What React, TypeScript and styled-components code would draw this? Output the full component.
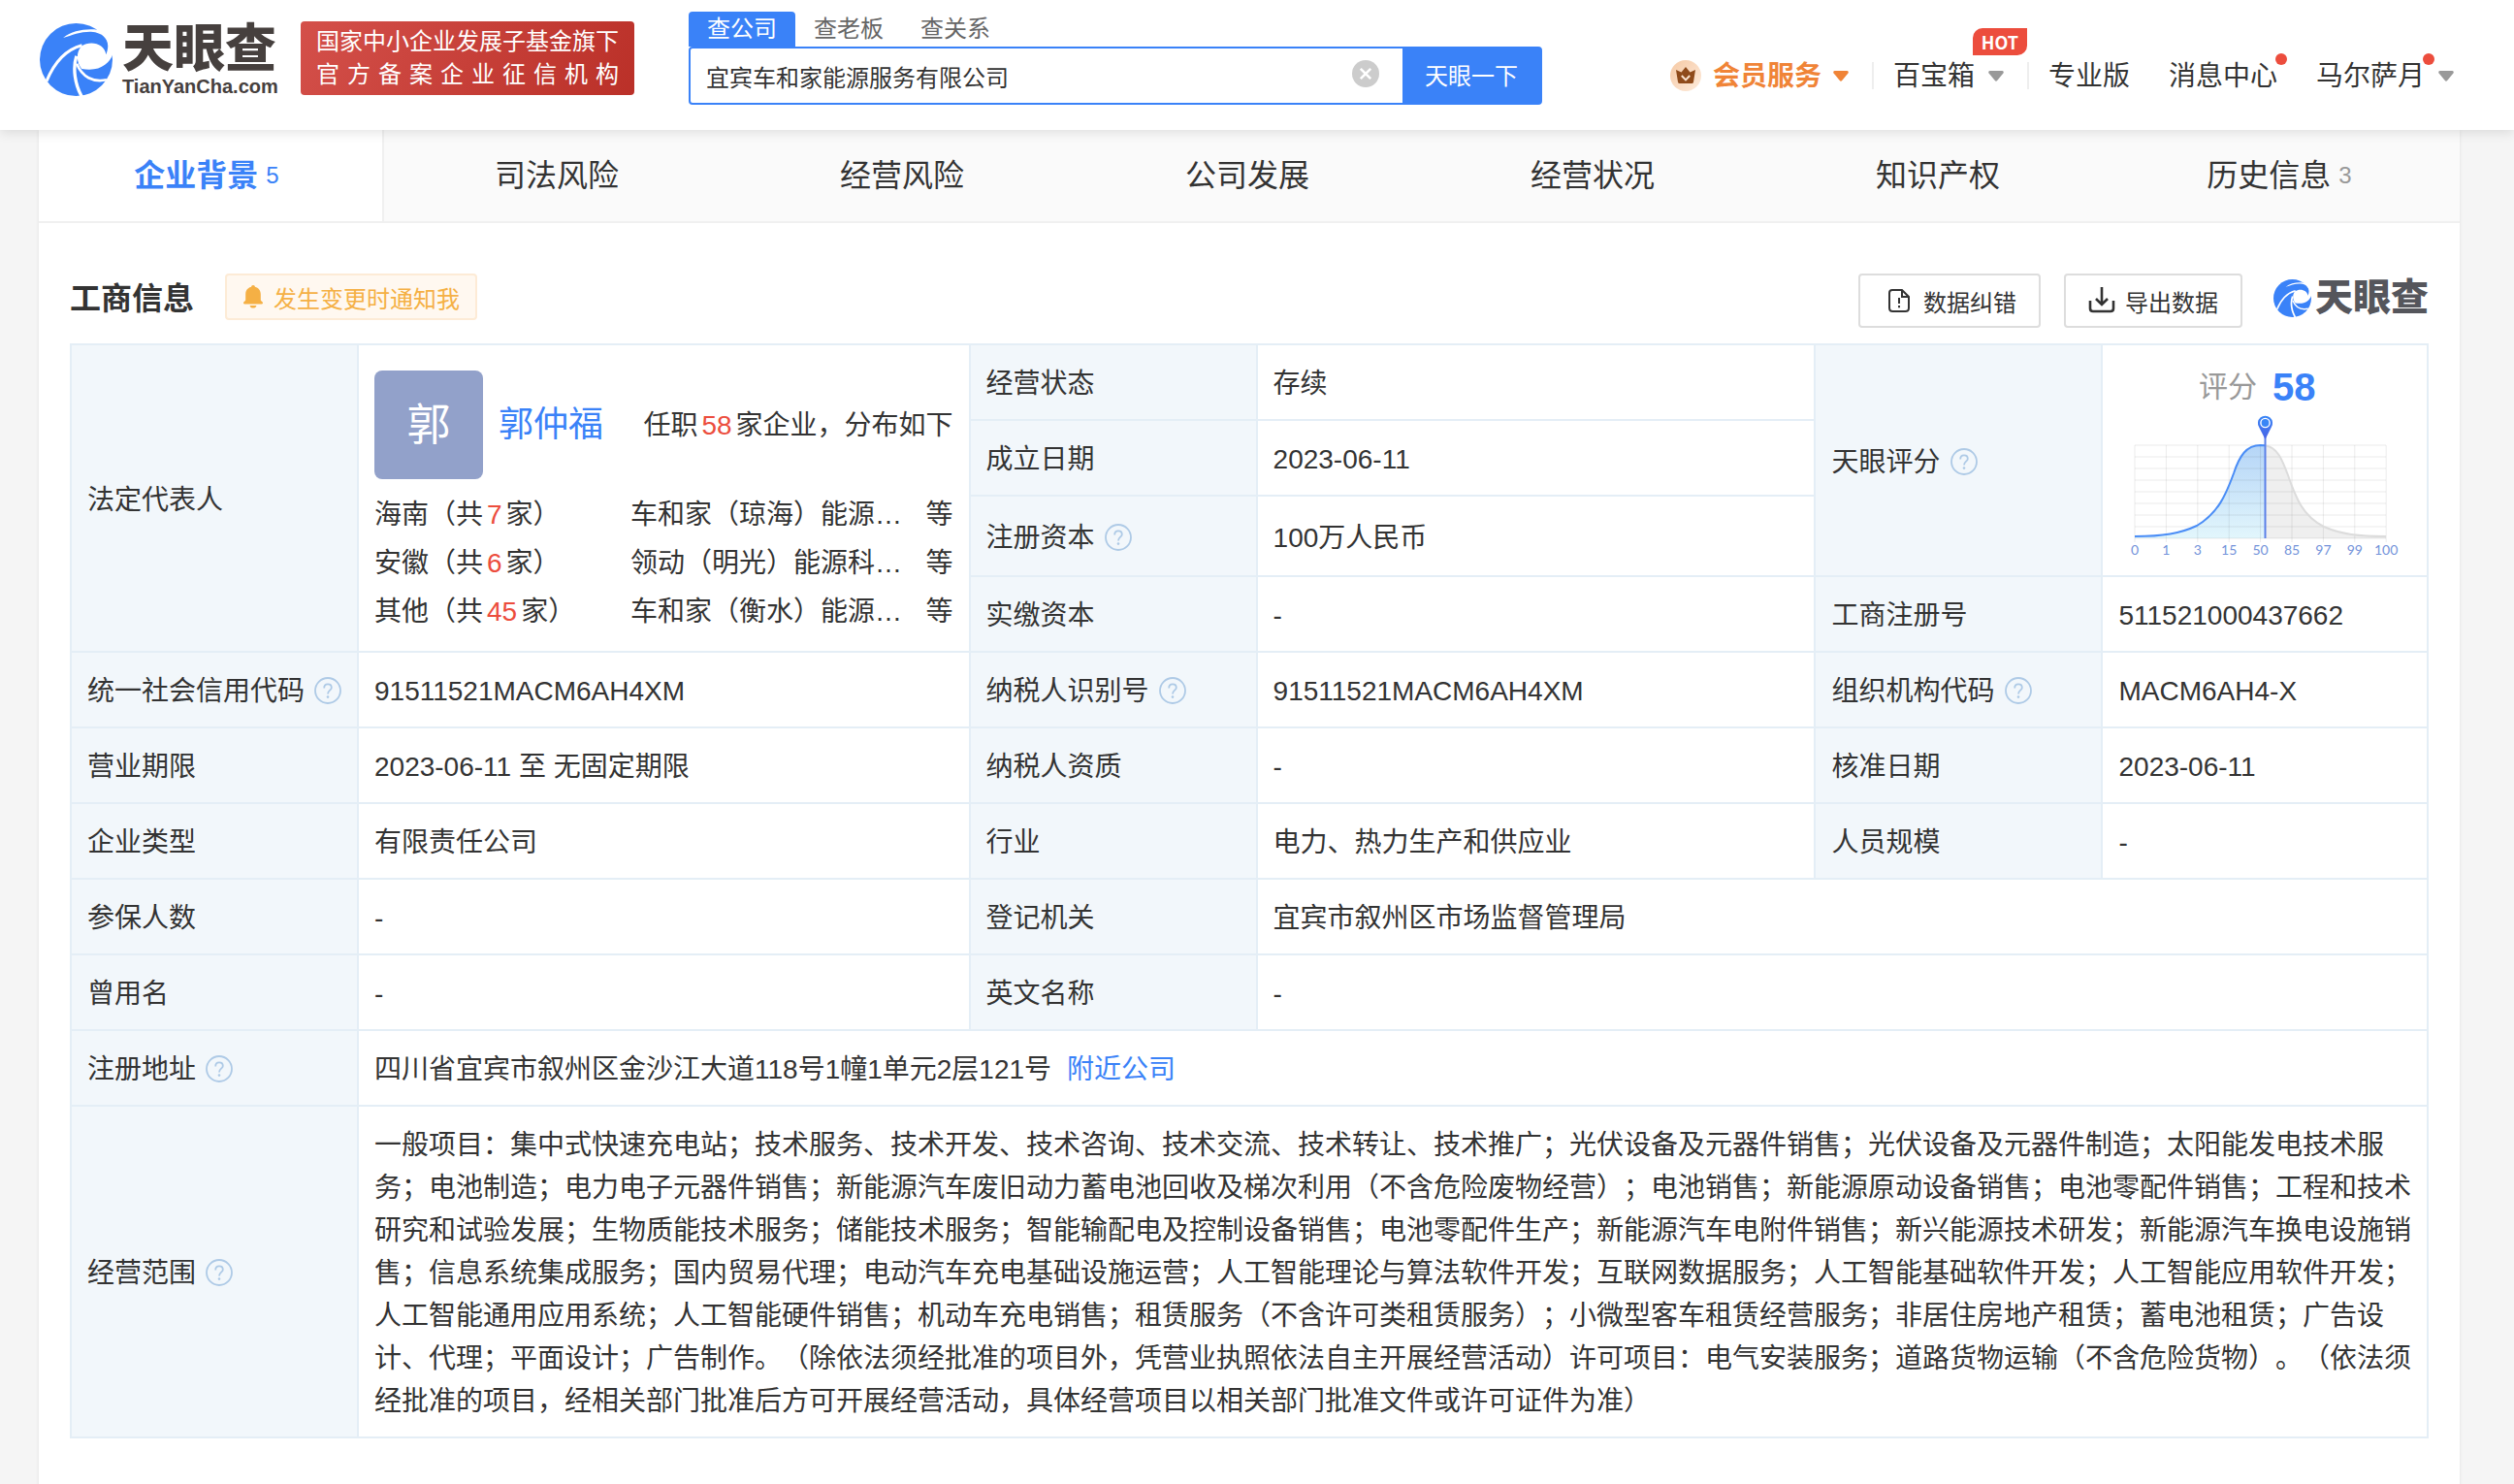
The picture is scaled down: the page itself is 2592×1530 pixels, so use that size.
import React from 'react';
import styled, { createGlobalStyle } from 'styled-components';

const BLUE = '#3a82f8';
const RED = '#ec4d3d';
const LINE = '#e4eef6';

const GlobalStyle = createGlobalStyle`
  *, *::before, *::after { box-sizing: border-box; }
  body {
    margin: 0;
    background: #f5f5f5;
    color: #333;
    font-family: "Liberation Sans", "Noto Sans CJK SC", sans-serif;
    font-size: 28px;
    line-height: 44px;
    text-spacing-trim: space-all;
  }
  a { color: inherit; text-decoration: none; }
  button, input { font-family: inherit; color: inherit; margin: 0; }
  svg { display: block; flex: none; }
`;

/* ---------- header ---------- */

const Header = styled.header`
  position: relative;
  z-index: 1;
  display: flex;
  align-items: flex-start;
  height: 134px;
  padding: 0 62px 0 41px;
  background: #fff;
  box-shadow: 0 2px 12px rgba(0, 0, 0, 0.12);
`;

const Brand = styled.a`
  display: flex;
  align-items: center;
  gap: 10px;
  margin-top: 23px;
  white-space: nowrap;
`;

const BrandText = styled.span`
  display: flex;
  flex-direction: column;
  width: 160px;
  color: #46403e;
`;

const BrandName = styled.span`
  font-size: 53px;
  line-height: 56px;
  font-weight: 900;
`;

const BrandDomain = styled.span`
  font-size: 20px;
  line-height: 20px;
  font-weight: 700;
`;

const Slogan = styled.p`
  width: 344px;
  margin: 22px 0 0 24px;
  padding: 4px 16px;
  border-radius: 4px;
  background: linear-gradient(120deg, #d4504a, #ba3028);
  color: #fff;
  font-size: 24px;
  line-height: 34px;
`;

const SloganLine = styled.span`
  display: block;
  white-space: nowrap;
  text-align: justify;
  text-align-last: justify;
`;

const Search = styled.form`
  flex: 0 1 880px;
  margin: 12px 0 0 56px;
`;

const SearchTabs = styled.div`
  display: flex;
`;

const SearchTab = styled.button<{ $active?: boolean }>`
  height: 36px;
  padding: 0 19px;
  border: 0;
  border-radius: 4px 4px 0 0;
  background: ${p => (p.$active ? BLUE : 'transparent')};
  color: ${p => (p.$active ? '#fff' : '#666')};
  font-size: 24px;
  line-height: 36px;
  white-space: nowrap;
`;

const SearchBox = styled.div`
  display: flex;
  height: 60px;
  border: 2px solid ${BLUE};
  border-radius: 4px;
  background: ${BLUE};
`;

const SearchField = styled.div`
  display: flex;
  align-items: center;
  flex: 1;
  padding: 0 24px 0 16px;
  background: #fff;
  border-radius: 2px 0 0 2px;
`;

const SearchInput = styled.input`
  flex: 1;
  min-width: 0;
  height: 56px;
  padding: 0;
  border: 0;
  outline: 0;
  background: transparent;
  font-size: 24px;
`;

const IconButton = styled.button`
  padding: 0 0 4px;
  border: 0;
  background: transparent;
`;

const SearchSubmit = styled.button`
  width: 142px;
  padding: 0 0 4px;
  border: 0;
  background: transparent;
  color: #fff;
  font-size: 24px;
`;

const UserNav = styled.nav`
  display: flex;
  align-items: center;
  height: 60px;
  margin: 48px 0 0 auto;
`;

const NavLink = styled.a<{ $vip?: boolean }>`
  position: relative;
  display: flex;
  align-items: center;
  gap: ${p => (p.$vip ? 12 : 14)}px;
  padding: 0 20px;
  color: ${p => (p.$vip ? '#f08437' : '#333')};
  font-weight: ${p => (p.$vip ? 700 : 400)};
  white-space: nowrap;
  &:last-child { padding-right: 0; }
`;

const NavLabel = styled.span`
  position: relative;
  padding-top: 2px;
`;

const NavDivider = styled.span`
  width: 2px;
  height: 28px;
  margin-left: 4px;
  background: #eee;
`;

const Dot = styled.i`
  position: absolute;
  top: 0;
  right: -10px;
  width: 12px;
  height: 12px;
  border-radius: 50%;
  background: ${RED};
`;

const HotBadge = styled.b`
  position: absolute;
  right: -4px;
  bottom: 44px;
  width: 56px;
  height: 28px;
  border-radius: 10px 0 10px 0;
  background: ${RED};
  color: #fff;
  font-family: "Noto Sans CJK SC", sans-serif;
  font-size: 18px;
  line-height: 28px;
  text-align: center;
`;

/* ---------- page ---------- */

const Page = styled.main`
  min-height: calc(100vh - 134px);
  margin: 0 56px 0 40px;
  background: #fff;
  box-shadow: 0 0 4px rgba(0, 0, 0, 0.08);
`;

const TabBar = styled.nav`
  display: grid;
  grid-template-columns: repeat(7, 1fr);
  height: 96px;
  padding-right: 4px;
  border-bottom: 2px solid #f0f0f0;
  background: #fafafa;
`;

const Tab = styled.a<{ $active?: boolean }>`
  display: flex;
  align-items: center;
  justify-content: center;
  gap: 8px;
  border-right: ${p => (p.$active ? '2px solid #f0f0f0' : '0')};
  background: ${p => (p.$active ? '#fff' : 'transparent')};
  color: ${p => (p.$active ? BLUE : '#333')};
  font-size: 32px;
  font-weight: ${p => (p.$active ? 700 : 400)};
`;

const TabCount = styled.span<{ $active?: boolean }>`
  margin-right: 8px;
  color: ${p => (p.$active ? BLUE : '#999')};
  font-size: 24px;
  font-weight: 400;
`;

const Section = styled.section`
  padding: 52px 32px;
`;

const SectionHead = styled.div`
  display: flex;
  justify-content: space-between;
  align-items: flex-start;
  margin-bottom: 16px;
`;

const HeadGroup = styled.div`
  display: flex;
  align-items: flex-start;
`;

const Title = styled.h2`
  margin: 0 32px 0 0;
  padding-top: 2px;
  font-size: 32px;
  line-height: 48px;
`;

const NotifyButton = styled.button`
  display: flex;
  align-items: center;
  gap: 10px;
  height: 48px;
  padding: 0 16px;
  border: 2px solid #fdebd6;
  border-radius: 4px;
  background: #fff8f0;
  color: #f5b045;
  font-size: 24px;
`;

const ToolButton = styled.button`
  display: flex;
  align-items: center;
  gap: 10px;
  height: 56px;
  margin-right: 24px;
  padding: 0 23px;
  border: 2px solid #ddd;
  border-radius: 4px;
  background: #fff;
  font-size: 24px;
`;

const Watermark = styled.div`
  display: flex;
  align-items: center;
  gap: 4px;
  height: 50px;
  margin-left: 8px;
  color: #55565c;
  font-size: 39px;
  font-weight: 900;
`;

/* ---------- table ---------- */

const Table = styled.table`
  width: 100%;
  table-layout: fixed;
  border-collapse: collapse;
`;

const LabelCol = styled.col`
  width: 296px;
`;

const ValueCol = styled.col<{ $width?: string }>`
  width: ${p => p.$width ?? 'auto'};
`;

const Row = styled.tr<{ $tall?: boolean }>`
  height: ${p => (p.$tall ? 83 : 78)}px;
`;

const Label = styled.th`
  padding: 18px 14px 14px 16px;
  border: 2px solid ${LINE};
  background: #f2f7fb;
  font-weight: 400;
  text-align: left;
  white-space: nowrap;
`;

const LabelInner = styled.span`
  display: flex;
  align-items: center;
  gap: 10px;
`;

const Value = styled.td`
  padding: 18px 16px 14px;
  border: 2px solid ${LINE};
`;

const ScopeValue = styled(Value)`
  padding-right: 14px;
`;

const Help = styled.svg`
  width: 28px;
  height: 28px;
  margin-bottom: 2px;
`;

const Person = styled.div`
  display: flex;
  align-items: center;
  margin: 6px 0 12px;
  white-space: nowrap;
`;

const Avatar = styled.span`
  width: 112px;
  height: 112px;
  margin-right: 16px;
  border-radius: 8px;
  background: #92a1ca;
  color: #fff;
  font-size: 45px;
  line-height: 114px;
  text-align: center;
`;

const PersonName = styled.a`
  color: ${BLUE};
  font-size: 36px;
`;

const PersonNote = styled.span`
  margin-left: auto;
  padding-top: 2px;
`;

const Count = styled.em`
  margin: 0 4px;
  color: ${RED};
  font-style: normal;
`;

const Regions = styled.ul`
  margin: 0;
  padding: 0;
  list-style: none;
`;

const Region = styled.li`
  display: grid;
  grid-template-columns: 264px 1fr auto;
  line-height: 50px;
  white-space: nowrap;
`;

const Score = styled.div`
  display: flex;
  align-items: center;
  justify-content: center;
  gap: 16px;
  padding-right: 16px;
  color: #999;
  font-size: 30px;
  line-height: 50px;
`;

const ScoreNumber = styled.b`
  color: ${BLUE};
  font-size: 40px;
`;

const ScoreCell = styled(Value)`
  padding: 12px 16px 8px;
`;

const Chart = styled.svg`
  width: 290px;
  height: 155px;
  margin: 0 auto;
`;

const Nearby = styled.a`
  margin-left: 16px;
  color: ${BLUE};
`;

/* ---------- drawings ---------- */

const LogoMark = ({ size }: { size: number }) => (
  <svg width={size} height={size} viewBox="32 27 224 224" aria-hidden="true">
    <circle cx="144" cy="139" r="112" fill="#3a82f8" />
    <path
      fill="#fff"
      d="M104 72 C132 50 170 43 210 47 L262 40 L262 123 L256 124 C247 150 216 178 161 167 C146 150 142 118 160 98 C188 78 232 90 236 123 C250 90 240 57 190 53 C160 52 132 63 104 72 Z"
    />
    <g fill="none" stroke="#fff">
      <path strokeWidth="9" d="M162 95 C112 108 78 145 53 205" />
      <path strokeWidth="10" d="M145 128 C133 165 140 215 162 254" />
      <path strokeWidth="8" d="M146 152 C162 192 196 210 238 201" />
    </g>
  </svg>
);

const Caret = ({ color }: { color: string }) => (
  <svg width="16" height="11" viewBox="0 0 16 11" aria-hidden="true">
    <path d="M1.5 0 H14.5 Q16.5 0.6 15.4 2.4 L9.2 10 Q8 11.4 6.8 10 L0.6 2.4 Q-0.5 0.6 1.5 0 Z" fill={color} />
  </svg>
);

const Crown = () => (
  <svg width="32" height="32" viewBox="0 0 32 32" aria-hidden="true">
    <defs>
      <linearGradient id="crownBack" x1="0" y1="0" x2="1" y2="1">
        <stop offset="0" stopColor="#f6c9a4" />
        <stop offset="1" stopColor="#fdebdc" />
      </linearGradient>
    </defs>
    <circle cx="16" cy="16" r="16" fill="url(#crownBack)" />
    <path d="M6 10 L11.5 12.5 L16 7 L20.5 12.5 L26 10 L24 22.5 Q23.7 24 22.5 24 H9.5 Q8.3 24 8 22.5 Z" fill="#8f4b1b" />
    <path d="M11.8 16 L16 20.4 L20.2 16" fill="none" stroke="#fbe3cf" strokeWidth="2" />
  </svg>
);

const ClearIcon = () => (
  <svg width="28" height="28" viewBox="0 0 28 28" aria-hidden="true">
    <circle cx="14" cy="14" r="14" fill="#ccc" />
    <path d="M8.8 8.8 L19.2 19.2 M19.2 8.8 L8.8 19.2" stroke="#fff" strokeWidth="2.6" />
  </svg>
);

const Bell = () => (
  <svg width="22" height="24" viewBox="0 0 22 24" aria-hidden="true">
    <path
      d="M11 0 C12.2 0 12.8 0.8 12.9 1.7 C16.6 2.5 18.8 5.4 18.8 9.4 V15.6 C19.2 16.8 21 17 21 18.3 C21 19.1 20.6 19.4 20 19.4 H2 C1.4 19.4 1 19.1 1 18.3 C1 17 2.8 16.8 3.2 15.6 V9.4 C3.2 5.4 5.4 2.5 9.1 1.7 C9.2 0.8 9.8 0 11 0 Z M7.6 21 H14.4 C14 22.8 12.8 23.6 11 23.6 C9.2 23.6 8 22.8 7.6 21 Z"
      fill="#f5b045"
    />
  </svg>
);

const FileAlert = () => (
  <svg width="32" height="26" viewBox="0 0 32 26" fill="none" stroke="#333" strokeWidth="2" aria-hidden="true">
    <path d="M10 2 H20 L27 9 V20.5 Q27 24 23.5 24 H10.5 Q7 24 7 20.5 V5 Q7 2 10 2 Z" />
    <path d="M20 2 V9 H27" />
    <path d="M17 10 V16 M17 18 V20.2" />
  </svg>
);

const Download = () => (
  <svg width="28" height="28" viewBox="0 0 28 28" fill="none" stroke="#333" strokeWidth="2.6" aria-hidden="true">
    <path d="M2 14 V22 Q2 25 5 25 H23 Q26 25 26 22 V14" />
    <path d="M14 0 V18 M8 12 L14 18 L20 12" />
  </svg>
);

const HelpIcon = () => (
  <Help viewBox="0 0 28 28" fill="none" stroke="#aecae6" aria-hidden="true">
    <circle cx="14" cy="14" r="13" strokeWidth="1.8" />
    <path d="M10.2 11.4 C10.2 8.8 11.8 7.4 14 7.4 C16.3 7.4 17.8 8.9 17.8 10.9 C17.8 13.6 14 13.8 14 17.4" strokeWidth="1.8" />
    <circle cx="14" cy="20.6" r="1.3" fill="#aecae6" stroke="none" />
  </Help>
);

const ticks = ['0', '1', '3', '15', '50', '85', '97', '99', '100'];
const tickX = (i: number) => 11 + i * 32.4;

const ScoreChart = () => (
  <Chart viewBox="0 0 290 155" role="img">
    <defs>
      <linearGradient id="areaFill" x1="0" y1="0" x2="0" y2="1">
        <stop offset="0" stopColor="#b5d5f7" />
        <stop offset="1" stopColor="#e2f6fc" />
      </linearGradient>
      <linearGradient id="pinFill" x1="0" y1="0" x2="0" y2="1">
        <stop offset="0" stopColor="#3a86f6" />
        <stop offset="1" stopColor="#4a63e6" />
      </linearGradient>
    </defs>
    <path d="M145 35.2 C158 36.5 163 50 169 66 C177 89 184 108 206 119 C224 127 242 129 270 129 V131 H145 Z" fill="#efefef" />
    <path d="M11 129 C40 129 58 126 75 118 C97 105 105 86 113 64 C119 46 126 35 140.6 35 L145 35.2 V131 H11 Z" fill="url(#areaFill)" />
    <g stroke="#000" strokeOpacity="0.08" strokeWidth="1">
      {Array.from({ length: 9 }, (_, i) => (
        <line key={i} x1="11" x2="270" y1={35 + i * 12} y2={35 + i * 12} />
      ))}
      {ticks.map((t, i) => (
        <line key={t} x1={tickX(i)} x2={tickX(i)} y1="35" y2="135" />
      ))}
    </g>
    <path d="M145 35.2 C158 36.5 163 50 169 66 C177 89 184 108 206 119 C224 127 242 129 270 129" fill="none" stroke="#dcdcdc" strokeWidth="2" />
    <path d="M11 129 C40 129 58 126 75 118 C97 105 105 86 113 64 C119 46 126 35 140.6 35 L145 35.2" fill="none" stroke="#4a8df6" strokeWidth="2" />
    <line x1="145.5" x2="145.5" y1="26" y2="131" stroke="#5b80e8" strokeWidth="2" />
    <path d="M145.5 29 L139.2 16.5 A7.6 7.6 0 1 1 151.8 16.5 Z" fill="url(#pinFill)" />
    <circle cx="145.5" cy="12" r="4.6" fill="#3a86f6" stroke="#fff" strokeWidth="1.4" />
    <g fill="#7393da" fontSize="14" textAnchor="middle" fontFamily="Lato, sans-serif">
      {ticks.map((t, i) => (
        <text key={t} x={tickX(i)} y="148">{t}</text>
      ))}
    </g>
  </Chart>
);

/* ---------- content ---------- */

const tabs: { name: string; count?: number }[] = [
  { name: '企业背景', count: 5 },
  { name: '司法风险' },
  { name: '经营风险' },
  { name: '公司发展' },
  { name: '经营状况' },
  { name: '知识产权' },
  { name: '历史信息', count: 3 },
];

const regions = [
  { place: '海南', count: 7, company: '车和家（琼海）能源…' },
  { place: '安徽', count: 6, company: '领动（明光）能源科…' },
  { place: '其他', count: 45, company: '车和家（衡水）能源…' },
];

const scope =
  '一般项目：集中式快速充电站；技术服务、技术开发、技术咨询、技术交流、技术转让、技术推广；光伏设备及元器件销售；光伏设备及元器件制造；太阳能发电技术服务；电池制造；电力电子元器件销售；新能源汽车废旧动力蓄电池回收及梯次利用（不含危险废物经营）；电池销售；新能源原动设备销售；电池零配件销售；工程和技术研究和试验发展；生物质能技术服务；储能技术服务；智能输配电及控制设备销售；电池零配件生产；新能源汽车电附件销售；新兴能源技术研发；新能源汽车换电设施销售；信息系统集成服务；国内贸易代理；电动汽车充电基础设施运营；人工智能理论与算法软件开发；互联网数据服务；人工智能基础软件开发；人工智能应用软件开发；人工智能通用应用系统；人工智能硬件销售；机动车充电销售；租赁服务（不含许可类租赁服务）；小微型客车租赁经营服务；非居住房地产租赁；蓄电池租赁；广告设计、代理；平面设计；广告制作。（除依法须经批准的项目外，凭营业执照依法自主开展经营活动）许可项目：电气安装服务；道路货物运输（不含危险货物）。（依法须经批准的项目，经相关部门批准后方可开展经营活动，具体经营项目以相关部门批准文件或许可证件为准）';

const Field = ({ name, help, rows }: { name: string; help?: boolean; rows?: number }) => (
  <Label scope="row" rowSpan={rows}>
    <LabelInner>
      {name}
      {help && <HelpIcon />}
    </LabelInner>
  </Label>
);

export default function App() {
  return (
    <>
      <GlobalStyle />
      <Header>
        <Brand href="#">
          <LogoMark size={75} />
          <BrandText>
            <BrandName>天眼查</BrandName>
            <BrandDomain>TianYanCha.com</BrandDomain>
          </BrandText>
        </Brand>
        <Slogan>
          <SloganLine>国家中小企业发展子基金旗下</SloganLine>
          <SloganLine>官方备案企业征信机构</SloganLine>
        </Slogan>
        <Search onSubmit={e => e.preventDefault()}>
          <SearchTabs>
            <SearchTab type="button" $active>查公司</SearchTab>
            <SearchTab type="button">查老板</SearchTab>
            <SearchTab type="button">查关系</SearchTab>
          </SearchTabs>
          <SearchBox>
            <SearchField>
              <SearchInput aria-label="查公司" defaultValue="宜宾车和家能源服务有限公司" />
              <IconButton type="reset"><ClearIcon /></IconButton>
            </SearchField>
            <SearchSubmit type="submit">天眼一下</SearchSubmit>
          </SearchBox>
        </Search>
        <UserNav>
          <NavLink href="#" $vip>
            <Crown />
            <NavLabel>会员服务</NavLabel>
            <Caret color="#f08437" />
          </NavLink>
          <NavDivider />
          <NavLink href="#">
            <NavLabel>百宝箱</NavLabel>
            <Caret color="#999" />
            <HotBadge>HOT</HotBadge>
          </NavLink>
          <NavDivider />
          <NavLink href="#"><NavLabel>专业版</NavLabel></NavLink>
          <NavLink href="#"><NavLabel>消息中心<Dot /></NavLabel></NavLink>
          <NavLink href="#">
            <NavLabel>马尔萨月<Dot /></NavLabel>
            <Caret color="#999" />
          </NavLink>
        </UserNav>
      </Header>

      <Page>
        <TabBar>
          {tabs.map((tab, i) => (
            <Tab key={tab.name} href="#" $active={i === 0}>
              {tab.name}
              {tab.count && <TabCount $active={i === 0}>{tab.count}</TabCount>}
            </Tab>
          ))}
        </TabBar>

        <Section>
          <SectionHead>
            <HeadGroup>
              <Title>工商信息</Title>
              <NotifyButton type="button"><Bell />发生变更时通知我</NotifyButton>
            </HeadGroup>
            <HeadGroup>
              <ToolButton type="button"><FileAlert />数据纠错</ToolButton>
              <ToolButton type="button"><Download />导出数据</ToolButton>
              <Watermark><LogoMark size={39} />天眼查</Watermark>
            </HeadGroup>
          </SectionHead>

          <Table>
            <colgroup>
              <LabelCol />
              <ValueCol $width="25.95%" />
              <LabelCol />
              <ValueCol $width="23.7%" />
              <LabelCol />
              <ValueCol />
            </colgroup>
            <tbody>
              <Row>
                <Field name="法定代表人" rows={4} />
                <Value rowSpan={4}>
                  <Person>
                    <Avatar>郭</Avatar>
                    <PersonName href="#">郭仲福</PersonName>
                    <PersonNote>任职<Count>58</Count>家企业，分布如下</PersonNote>
                  </Person>
                  <Regions>
                    {regions.map(r => (
                      <Region key={r.place}>
                        <span>{r.place}（共<Count>{r.count}</Count>家）</span>
                        <a href="#">{r.company}</a>
                        <span>等</span>
                      </Region>
                    ))}
                  </Regions>
                </Value>
                <Field name="经营状态" />
                <Value>存续</Value>
                <Field name="天眼评分" help rows={3} />
                <ScoreCell rowSpan={3}>
                  <Score>评分<ScoreNumber>58</ScoreNumber></Score>
                  <ScoreChart />
                </ScoreCell>
              </Row>
              <Row>
                <Field name="成立日期" />
                <Value>2023-06-11</Value>
              </Row>
              <Row $tall>
                <Field name="注册资本" help />
                <Value>100万人民币</Value>
              </Row>
              <Row>
                <Field name="实缴资本" />
                <Value>-</Value>
                <Field name="工商注册号" />
                <Value>511521000437662</Value>
              </Row>
              <Row>
                <Field name="统一社会信用代码" help />
                <Value>91511521MACM6AH4XM</Value>
                <Field name="纳税人识别号" help />
                <Value>91511521MACM6AH4XM</Value>
                <Field name="组织机构代码" help />
                <Value>MACM6AH4-X</Value>
              </Row>
              <Row>
                <Field name="营业期限" />
                <Value>2023-06-11 至 无固定期限</Value>
                <Field name="纳税人资质" />
                <Value>-</Value>
                <Field name="核准日期" />
                <Value>2023-06-11</Value>
              </Row>
              <Row>
                <Field name="企业类型" />
                <Value>有限责任公司</Value>
                <Field name="行业" />
                <Value>电力、热力生产和供应业</Value>
                <Field name="人员规模" />
                <Value>-</Value>
              </Row>
              <Row>
                <Field name="参保人数" />
                <Value>-</Value>
                <Field name="登记机关" />
                <Value colSpan={3}>宜宾市叙州区市场监督管理局</Value>
              </Row>
              <Row>
                <Field name="曾用名" />
                <Value>-</Value>
                <Field name="英文名称" />
                <Value colSpan={3}>-</Value>
              </Row>
              <Row>
                <Field name="注册地址" help />
                <Value colSpan={5}>
                  四川省宜宾市叙州区金沙江大道118号1幢1单元2层121号
                  <Nearby href="#">附近公司</Nearby>
                </Value>
              </Row>
              <Row>
                <Field name="经营范围" help />
                <ScopeValue colSpan={5}>{scope}</ScopeValue>
              </Row>
            </tbody>
          </Table>
        </Section>
      </Page>
    </>
  );
}
